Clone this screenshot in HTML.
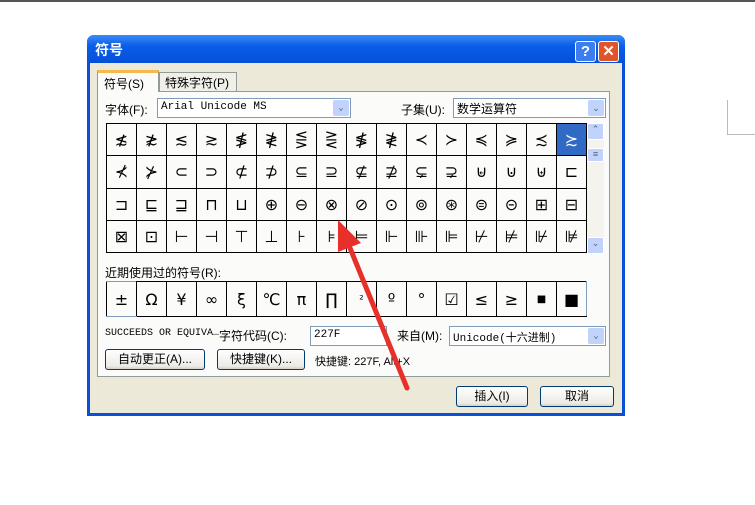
<!DOCTYPE html>
<html><head><meta charset="utf-8"><style>
*{margin:0;padding:0;box-sizing:border-box}
body{width:755px;height:505px;background:#fff;position:relative;overflow:hidden;font-family:"Liberation Sans","Noto Sans CJK SC",sans-serif;font-size:12px;color:#000}
.a{position:absolute}
.dlg{left:87px;top:35px;width:538px;height:381px;background:#0A4FD8;border-radius:7px 7px 0 0}
.title{left:0;top:0;width:538px;height:28px;border-radius:7px 7px 0 0;background:linear-gradient(#3A8CF6,#0A5DE8 40%,#0650D8);color:#fff;font-weight:bold;font-size:14px;padding:5px 8px}
.body{left:3px;top:28px;width:532px;height:350px;background:#ECE9D8}
.panel{left:10px;top:56px;width:513px;height:286px;border:1px solid #919B9C;background:#FBFBF9}
.grid{border-collapse:collapse;position:absolute}
.grid td{border:1px solid #000;width:30px;text-align:center;font-family:"DejaVu Sans",sans-serif;font-size:16px;padding:0}
.combo{background:#fff;border:1px solid #7F9DB9;height:20px;font-family:"Liberation Mono","Noto Sans CJK SC",monospace;font-size:11px;padding:2px 3px}
.dd{position:absolute;right:1px;top:1px;width:16px;height:16px;background:#C1D3FB;border-radius:2px;color:#4D6185;font-size:9px;text-align:center;line-height:16px}
.btn{border:1px solid #003C74;border-radius:3px;background:linear-gradient(#fff,#ECEBE6 85%,#D6D0C5);height:21px;text-align:center;font-size:12px;line-height:19px}
.sb{background:#C1D3FB;border:1px solid #fff;border-radius:2px;color:#4D6185;font-size:9px;text-align:center}
</style></head><body>
<div class="a" style="left:0;top:0;width:755px;height:2px;background:#555"></div>
<div class="a" style="left:727px;top:100px;width:28px;height:35px;border-left:1px solid #bbb;border-bottom:1px solid #bbb"></div>
<div class="a dlg">
 <div class="a title">符号</div>
 <div class="a" style="left:488px;top:6px;width:21px;height:21px;background:#3C7DF0;border:1px solid #fff;border-radius:3px;color:#fff;font-weight:bold;font-size:15px;text-align:center;line-height:19px">?</div>
 <div class="a" style="left:511px;top:6px;width:21px;height:21px;background:#E0542C;border:1px solid #fff;border-radius:3px;color:#fff;font-weight:bold;font-size:15px;text-align:center;line-height:19px">✕</div>
 <div class="a body">
 </div>
 <div class="a panel"></div>
 <div class="a" style="left:10px;top:35px;width:62px;height:22px;background:#FBFBF9;border:1px solid #919B9C;border-top:3px solid #F7B84A;border-bottom:none;padding:2px 6px">符号(S)</div>
 <div class="a" style="left:72px;top:37px;width:78px;height:19px;background:#F0EFE8;border:1px solid #919B9C;border-bottom:none;padding:1px 5px">特殊字符(P)</div>
 <div class="a" style="left:18px;top:66px">字体(F):</div>
 <div class="a combo" style="left:70px;top:63px;width:194px">Arial Unicode MS<div class="dd">⌄</div></div>
 <div class="a" style="left:314px;top:66px">子集(U):</div>
 <div class="a combo" style="left:366px;top:63px;width:153px;font-family:'Noto Sans CJK SC',sans-serif;font-size:12px;padding:1px 3px">数学运算符<div class="dd">⌄</div></div>
 <table class="grid" style="left:19px;top:88px;height:130px">
 <tr><td>≴</td><td>≵</td><td>≲</td><td>≳</td><td>≸</td><td>≹</td><td>⋚</td><td>⋛</td><td>≸</td><td>≹</td><td>≺</td><td>≻</td><td>≼</td><td>≽</td><td>≾</td><td style="background:#316AC5;color:#fff">≿</td></tr>
 <tr><td>⊀</td><td>⊁</td><td>⊂</td><td>⊃</td><td>⊄</td><td>⊅</td><td>⊆</td><td>⊇</td><td>⊈</td><td>⊉</td><td>⊊</td><td>⊋</td><td>⊌</td><td>⊍</td><td>⊎</td><td>⊏</td></tr>
 <tr><td>⊐</td><td>⊑</td><td>⊒</td><td>⊓</td><td>⊔</td><td>⊕</td><td>⊖</td><td>⊗</td><td>⊘</td><td>⊙</td><td>⊚</td><td>⊛</td><td>⊜</td><td>⊝</td><td>⊞</td><td>⊟</td></tr>
 <tr><td>⊠</td><td>⊡</td><td>⊢</td><td>⊣</td><td>⊤</td><td>⊥</td><td>⊦</td><td>⊧</td><td>⊨</td><td>⊩</td><td>⊪</td><td>⊫</td><td>⊬</td><td>⊭</td><td>⊮</td><td>⊯</td></tr>
 </table>
 <div class="a" style="left:500px;top:88px;width:17px;height:131px;background:#F4F3EE"></div>
 <div class="a sb" style="left:500px;top:88px;width:17px;height:17px">⌃</div>
 <div class="a sb" style="left:500px;top:113px;width:17px;height:14px">≡</div>
 <div class="a sb" style="left:500px;top:202px;width:17px;height:17px">⌄</div>
 <div class="a" style="left:18px;top:229px">近期使用过的符号(R):</div>
 <table class="grid" style="left:19px;top:246px;height:36px;border:1px solid #7F9DB9">
 <tr style="font-size:20px"><td style="border-color:#7F9DB9 #000">±</td><td>Ω</td><td>¥</td><td>∞</td><td>ξ</td><td>℃</td><td>π</td><td>∏</td><td style="font-size:11px">²</td><td>º</td><td>°</td><td>☑</td><td>≤</td><td>≥</td><td style="font-size:10px">■</td><td style="border-right-color:#7F9DB9">■</td></tr>
 </table>
 <div class="a" style="left:18px;top:293px;font-family:'Liberation Mono',monospace;font-size:10px">SUCCEEDS OR EQUIVA…</div>
 <div class="a" style="left:132px;top:292px">字符代码(C):</div>
 <div class="a combo" style="left:223px;top:291px;width:77px">227F</div>
 <div class="a" style="left:310px;top:292px">来自(M):</div>
 <div class="a combo" style="left:362px;top:291px;width:157px">Unicode(十六进制)<div class="dd">⌄</div></div>
 <div class="a btn" style="left:18px;top:314px;width:100px">自动更正(A)...</div>
 <div class="a btn" style="left:130px;top:314px;width:88px">快捷键(K)...</div>
 <div class="a" style="left:228px;top:318px;font-size:11px">快捷键: 227F, Alt+X</div>
 <div class="a btn" style="left:369px;top:351px;width:72px">插入(I)</div>
 <div class="a btn" style="left:453px;top:351px;width:74px">取消</div>
</div>
<svg class="a" style="left:0;top:0" width="755" height="505">
 <line x1="407" y1="388" x2="350" y2="248" stroke="#E8302A" stroke-width="5" stroke-linecap="round"/>
 <polygon points="338,220 338,252 361,243" fill="#E8302A"/>
</svg>
</body></html>
